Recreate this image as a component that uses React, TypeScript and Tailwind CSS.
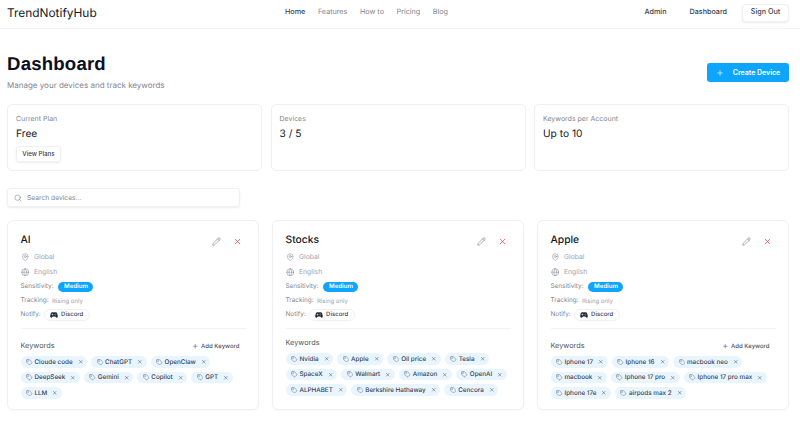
import React from 'react';
import { Search, Plus, Pencil, X, MapPin, Globe, Tag } from 'lucide-react';
import { IoGameController } from 'react-icons/io5';

const stats = [
  { label: 'Current Plan', value: 'Free', action: true },
  { label: 'Devices', value: '3 / 5' },
  { label: 'Keywords per Account', value: 'Up to 10' },
];

const devices = [
  {
    name: 'AI',
    canAdd: true,
    keywords: ['Cloude code', 'ChatGPT', 'OpenClaw', 'DeepSeek', 'Gemini', 'Copilot', 'GPT', 'LLM'],
  },
  {
    name: 'Stocks',
    canAdd: false,
    keywords: ['Nvidia', 'Apple', 'Oil price', 'Tesla', 'SpaceX', 'Walmart', 'Amazon', 'OpenAI', 'ALPHABET', 'Berkshire Hathaway', 'Cencora'],
  },
  {
    name: 'Apple',
    canAdd: true,
    keywords: ['Iphone 17', 'Iphone 16', 'macbook neo', 'macbook', 'Iphone 17 pro', 'Iphone 17 pro max', 'Iphone 17e', 'airpods max 2'],
  },
];

const Chip = ({ text }: { text: string }) => (
  <span className="flex h-[11.5px] items-center rounded-full bg-[#e8f5ff] pl-[5.5px] pr-[4px] text-[6.3px] leading-[10px] font-medium text-[#374151]">
    <Tag className="mr-[2px] h-[6.5px] w-[6.5px]" strokeWidth={1.5} />
    {text}
    <X className="ml-[5px] h-[5.5px] w-[5.5px]" strokeWidth={2} />
  </span>
);

const DeviceCard = ({ device }: { device: (typeof devices)[number] }) => (
  <div className="h-[190px] rounded-[6px] border border-[#eef0f3] bg-white px-[12.5px] pt-[11.5px] shadow-[0_1px_2px_rgba(0,0,0,0.03)]">
    <div className="flex items-start justify-between">
      <h3 className="text-[10.3px] font-medium leading-[14px] text-[#111827]">{device.name}</h3>
      <div className="mt-[4.5px] mr-[4px] flex items-center gap-[11.5px]">
        <Pencil className="h-[9px] w-[9px] text-[#6b7280]" strokeWidth={1.5} />
        <X className="h-[9px] w-[9px] text-[#ef4444]" strokeWidth={2} />
      </div>
    </div>
    <div className="mt-[3px] flex h-[15px] items-center gap-[5px] text-[6.8px] text-[#9ca3af]">
      <MapPin className="h-[8.5px] w-[8.5px] text-[#6b7280]" strokeWidth={1.25} />
      Global
    </div>
    <div className="flex h-[15px] items-center gap-[5px] text-[6.8px] text-[#9ca3af]">
      <Globe className="h-[8.5px] w-[8.5px] text-[#6b7280]" strokeWidth={1.25} />
      English
    </div>
    <div className="flex h-[14px] items-center gap-[5px] text-[6.4px] text-[#7f8690]">
      Sensitivity:
      <span className="flex h-[10px] w-[35px] items-center justify-center rounded-full bg-[#0ea5ff] text-[6.1px] font-semibold text-white">Medium</span>
    </div>
    <div className="flex h-[14px] items-center gap-[3.5px] pt-[1px] text-[6.4px] text-[#7f8690]">
      Tracking:
      <span className="text-[6px] text-[#9ca3af]">Rising only</span>
    </div>
    <div className="flex h-[14px] items-center gap-[3px] text-[6.4px] text-[#7f8690]">
      Notify:
      <span className="flex h-[12px] items-center gap-[3px] rounded-full border border-[#eef0f3] px-[5.5px] text-[6px] leading-[12px] font-medium text-[#374151]">
        <IoGameController className="h-[8px] w-[8px] text-[#1f2937]" />
        Discord
      </span>
    </div>
    <div className="mt-[6.5px] border-t border-[#f1f3f5]" />
    {device.canAdd ? (
      <div className="mt-[12px] flex h-[10px] items-center justify-between pr-[6px]">
        <span className="text-[7.3px] text-[#4b5563]">Keywords</span>
        <span className="flex items-center gap-[3px] text-[6px] font-medium text-[#4b5563]">
          <Plus className="h-[6.5px] w-[6.5px]" strokeWidth={2} />
          Add Keyword
        </span>
      </div>
    ) : (
      <div className="mt-[9px] flex h-[10px] items-center text-[7.3px] text-[#4b5563]">Keywords</div>
    )}
    <div className="mt-[5px] flex flex-wrap gap-x-[4px] gap-y-[4px]">
      {device.keywords.map((k) => (
        <Chip key={k} text={k} />
      ))}
    </div>
  </div>
);

export default function App() {
  return (
    <div className="h-[437px] w-[800px] overflow-hidden bg-white font-['Inter',sans-serif] text-[#111827] [text-rendering:geometricPrecision]">
      <header className="flex h-[29px] items-center justify-between border-b border-[#f1f3f5] px-[7px] pr-[11px] pb-[3px]">
        <div className="w-[278px] text-[11.9px] leading-none">TrendNotifyHub</div>
        <nav className="flex items-center gap-[12.6px] text-[7.2px] text-[#7f8690]">
          <span className="font-medium text-[#374151]">Home</span>
          <span>Features</span>
          <span>How to</span>
          <span>Pricing</span>
          <span>Blog</span>
        </nav>
        <div className="ml-auto flex items-center text-[7.2px] font-medium text-[#374151]">
          <span>Admin</span>
          <span className="ml-[23px]">Dashboard</span>
          <button className="ml-[15px] flex h-[18px] w-[47px] items-center justify-center rounded-[4px] border border-[#eef0f3] bg-white shadow-[0_1px_2px_rgba(0,0,0,0.08)]">
            Sign Out
          </button>
        </div>
      </header>

      <main className="px-[7px] pr-[11px]">
        <div className="mt-[22px] flex items-start justify-between">
          <div>
            <h1 className="font-['Liberation_Sans',sans-serif] text-[18.6px] font-bold leading-[26px] tracking-[0.2px] text-[#0b1020]">Dashboard</h1>
            <p className="mt-[2px] text-[8px] leading-[12px] text-[#7f8690]">Manage your devices and track keywords</p>
          </div>
          <button className="mt-[12px] flex h-[19px] w-[82px] items-center justify-center gap-[9px] rounded-[3px] bg-[#0ea5ff] text-[7px] leading-[19px] font-semibold text-white">
            <Plus className="h-[8px] w-[8px]" strokeWidth={2} />
            Create Device
          </button>
        </div>

        <div className="mt-[13px] grid grid-cols-3 gap-[8.5px]">
          {stats.map((s) => (
            <div key={s.label} className="h-[67px] rounded-[5px] border border-[#eef0f3] px-[8px] pt-[9px]">
              <div className="text-[7px] leading-[9px] text-[#7f8690]">{s.label}</div>
              <div className="mt-[3.5px] text-[10.2px] leading-[14px] text-[#111827]">{s.value}</div>
              {s.action && (
                <button className="mt-[5px] flex h-[16px] w-[45px] items-center justify-center rounded-[3px] border border-[#eef0f3] text-[6.2px] font-medium text-[#374151] shadow-[0_1px_2px_rgba(0,0,0,0.08)]">
                  View Plans
                </button>
              )}
            </div>
          ))}
        </div>

        <div className="mt-[17px] flex h-[19px] w-[233px] items-center gap-[5px] rounded-[3px] border border-[#eef0f3] px-[6px] text-[6.7px] leading-[10px] text-[#7f8690] shadow-[0_1px_2px_rgba(0,0,0,0.08)]">
          <Search className="h-[8px] w-[8px] text-[#6b7280]" strokeWidth={1.5} />
          Search devices...
        </div>

        <div className="mt-[13px] grid grid-cols-3 gap-[13px]">
          {devices.map((d) => (
            <DeviceCard key={d.name} device={d} />
          ))}
        </div>
      </main>
    </div>
  );
}
